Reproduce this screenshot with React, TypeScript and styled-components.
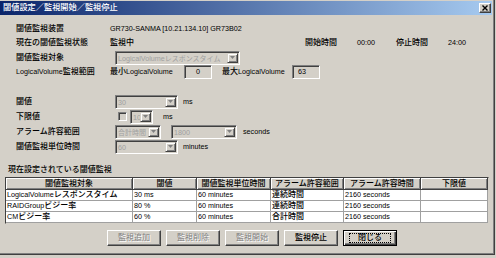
import React from 'react';
import styled, { createGlobalStyle } from 'styled-components';

const Global = createGlobalStyle`
  html, body { margin: 0; padding: 0; background: #d4d0c8; }
  body {
    font-family: "Liberation Sans", "Noto Sans CJK JP", sans-serif;
    font-size: 8px;
    font-weight: 500;
    line-height: 12px;
    color: #000;
  }
  * { box-sizing: border-box; }
`;

const Lat = styled.span`
  font-family: "Liberation Sans", sans-serif;
  font-size: 7.2px;
  font-weight: 400;
`;

function t(s: string) {
  const parts = s.split(/([\x20-\x7E]+)/);
  return parts.map((p, i) =>
    p === '' ? null : /^[\x20-\x7E]+$/.test(p) ? (
      <Lat key={i}>{p}</Lat>
    ) : (
      <React.Fragment key={i}>{p}</React.Fragment>
    )
  );
}

const Window = styled.div`
  width: 495px;
  height: 255px;
  display: flex;
  flex-direction: column;
  background: #d4d0c8;
  padding: 1px 2px 0 0;
  border-right: 1px solid #404040;
  border-bottom: 1px solid #404040;
  box-shadow: inset -1px -1px #808080;
  overflow: hidden;
`;

const TitleBar = styled.div`
  height: 14px;
  display: flex;
  align-items: center;
  justify-content: space-between;
  padding: 0 1px 0 3px;
  background: linear-gradient(to right, #0a246a, #a6caf0);
`;

const TitleText = styled.div`
  color: #fff;
  font-size: 8.2px;
  line-height: 12px;
  white-space: nowrap;
`;

const CloseBtn = styled.div`
  width: 12px;
  height: 10px;
  display: flex;
  align-items: center;
  justify-content: center;
  background: #d4d0c8;
  border: 1px solid;
  border-color: #fff #404040 #404040 #fff;
  box-shadow: inset -1px -1px #808080;
`;

const Section = styled.div<{ $top: number }>`
  margin-top: ${(p) => p.$top}px;
  padding-left: 16px;
  display: flex;
  flex-direction: column;
`;

const Row = styled.div<{ $h: number }>`
  height: ${(p) => p.$h}px;
  display: flex;
  align-items: center;
  white-space: nowrap;
`;

const Cell = styled.div<{ $w?: number; $ml?: number }>`
  ${(p) => (p.$w ? `width: ${p.$w}px; flex: none;` : '')}
  margin-left: ${(p) => p.$ml || 0}px;
  white-space: nowrap;
`;

const SelectBox = styled.div<{ $w: number; $ml?: number }>`
  width: ${(p) => p.$w}px;
  height: 14px;
  margin-left: ${(p) => p.$ml || 0}px;
  flex: none;
  display: flex;
  border: 1px solid;
  border-color: #808080 #fff #fff #808080;
  box-shadow: inset 1px 1px #404040;
  background: #d4d0c8;
  padding: 1px;
`;

const SelectText = styled.div`
  flex: 1;
  min-width: 0;
  overflow: hidden;
  color: #a0a0a0;
  font-size: 7px;
  font-weight: 400;
  padding-left: 1px;
  line-height: 11px;
  white-space: nowrap;
`;

const ArrowBtn = styled.div`
  width: 11px;
  flex: none;
  display: flex;
  align-items: center;
  justify-content: center;
  background: #d4d0c8;
  border: 1px solid;
  border-color: #d4d0c8 #404040 #404040 #d4d0c8;
  box-shadow: inset 1px 1px #fff, inset -1px -1px #808080;
`;

const Field = styled.div<{ $w: number; $center?: boolean }>`
  width: ${(p) => p.$w}px;
  height: 14px;
  flex: none;
  border: 1px solid;
  border-color: #808080 #fff #fff #808080;
  box-shadow: inset 1px 1px #404040;
  background: #d4d0c8;
  text-align: ${(p) => (p.$center ? 'center' : 'left')};
  padding-left: ${(p) => (p.$center ? 0 : 5)}px;
  line-height: 12px;
`;

const Check = styled.div`
  width: 9px;
  height: 9px;
  margin-left: 3px;
  flex: none;
  border: 1px solid;
  border-color: #808080 #fff #fff #808080;
  box-shadow: inset 1px 1px #404040;
  background: #d4d0c8;
`;

const TableLabel = styled.div`
  margin-top: 10px;
  height: 12px;
  padding-left: 8px;
  line-height: 12px;
`;

const Table = styled.div`
  margin: 1px 0 0 5px;
  width: 484px;
  display: grid;
  grid-template-columns: 127px 64px 74px 73px 77px 67px;
  grid-template-rows: 12px 11px 11px 11px;
  border: 1px solid;
  border-color: #404040 #d4d0c8 #d4d0c8 #404040;
  background: #fff;
`;

const Th = styled.div`
  background: #d4d0c8;
  border-right: 1px solid #404040;
  border-bottom: 1px solid #404040;
  box-shadow: inset 1px 1px #fff, inset -1px -1px #808080;
  text-align: center;
  line-height: 11px;
  white-space: nowrap;
  overflow: hidden;
`;

const Td = styled.div`
  background: #fff;
  border-right: 1px solid #a0a0a0;
  border-bottom: 1px solid #a0a0a0;
  padding-left: 1px;
  line-height: 10px;
  white-space: nowrap;
  overflow: hidden;
`;

const ButtonBar = styled.div`
  margin-top: 6px;
  display: flex;
  justify-content: center;
  gap: 5px;
  padding-left: 12px;
`;

const Btn = styled.div<{ $disabled?: boolean; $default?: boolean }>`
  width: 54px;
  height: 16px;
  display: flex;
  align-items: center;
  justify-content: center;
  background: #d4d0c8;
  border: 1px solid;
  border-color: ${(p) => (p.$default ? '#000' : '#fff #404040 #404040 #fff')};
  box-shadow: ${(p) =>
    p.$default
      ? 'inset 1px 1px #fff, inset -1px -1px #404040, inset -2px -2px #808080'
      : 'inset -1px -1px #808080'};
  color: ${(p) => (p.$disabled ? '#808080' : '#000')};
  font-weight: ${(p) => (p.$disabled ? 400 : 500)};
  text-shadow: ${(p) => (p.$disabled ? '1px 1px #fff' : 'none')};
  line-height: 10px;
`;

const Focus = styled.div`
  width: 42px;
  height: 10px;
  border: 1px dotted #000;
  display: flex;
  align-items: center;
  justify-content: center;
`;

const Arrow = () => (
  <svg width="5" height="3" viewBox="0 0 5 3">
    <polygon points="0,0 5,0 2.5,3" fill="#808080" />
  </svg>
);

const Select = ({ w, ml, value }: { w: number; ml?: number; value: string }) => (
  <SelectBox $w={w} $ml={ml}>
    <SelectText>{t(value)}</SelectText>
    <ArrowBtn>
      <Arrow />
    </ArrowBtn>
  </SelectBox>
);

const headers = ['閾値監視対象', '閾値', '閾値監視単位時間', 'アラーム許容範囲', 'アラーム許容時間', '下限値'];
const rows = [
  ['LogicalVolumeレスポンスタイム', '30 ms', '60 minutes', '連続時間', '2160 seconds', ''],
  ['RAIDGroupビジー率', '80 %', '60 minutes', '連続時間', '2160 seconds', ''],
  ['CMビジー率', '60 %', '60 minutes', '合計時間', '2160 seconds', ''],
];

export default function App() {
  return (
    <>
      <Global />
      <Window>
        <TitleBar>
          <TitleText>閾値設定／監視開始／監視停止</TitleText>
          <CloseBtn>
            <svg width="6" height="6" viewBox="0 0 6 6">
              <path d="M0.5 0.5 L5.5 5.5 M5.5 0.5 L0.5 5.5" stroke="#000" strokeWidth="1.4" />
            </svg>
          </CloseBtn>
        </TitleBar>

        <Section $top={7}>
          <Row $h={14}>
            <Cell $w={94}>閾値監視装置</Cell>
            <Cell>{t('GR730-SANMA [10.21.134.10] GR73B02')}</Cell>
          </Row>
          <Row $h={14}>
            <Cell $w={94}>現在の閾値監視状態</Cell>
            <Cell $w={195}>監視中</Cell>
            <Cell $w={52}>開始時間</Cell>
            <Cell $w={39}>{t('00:00')}</Cell>
            <Cell $w={52}>停止時間</Cell>
            <Cell>{t('24:00')}</Cell>
          </Row>
          <Row $h={15}>
            <Cell $w={99}>閾値監視対象</Cell>
            <Select w={125} value="LogicalVolumeレスポンスタイム" />
          </Row>
          <Row $h={14}>
            <Cell $w={94}>{t('LogicalVolume監視範囲')}</Cell>
            <Cell $w={74}>{t('最小LogicalVolume')}</Cell>
            <Field $w={28} $center>
              {t('0')}
            </Field>
            <Cell $w={70} $ml={10}>
              {t('最大LogicalVolume')}
            </Cell>
            <Field $w={28}>{t('63')}</Field>
          </Row>
        </Section>

        <Section $top={15}>
          <Row $h={15}>
            <Cell $w={99}>閾値</Cell>
            <Select w={63} value="30" />
            <Cell $ml={5}>{t('ms')}</Cell>
          </Row>
          <Row $h={15}>
            <Cell $w={99}>下限値</Cell>
            <Check />
            <Select w={23} ml={3} value="10" />
            <Cell $ml={10}>{t('ms')}</Cell>
          </Row>
          <Row $h={15}>
            <Cell $w={99}>アラーム許容範囲</Cell>
            <Select w={46} value="合計時間" />
            <Select w={66} ml={10} value="1800" />
            <Cell $ml={6}>{t('seconds')}</Cell>
          </Row>
          <Row $h={15}>
            <Cell $w={99}>閾値監視単位時間</Cell>
            <Select w={63} value="60" />
            <Cell $ml={5}>{t('minutes')}</Cell>
          </Row>
        </Section>

        <TableLabel>現在設定されている閾値監視</TableLabel>
        <Table>
          {headers.map((h) => (
            <Th key={h}>{t(h)}</Th>
          ))}
          {rows.map((r, i) =>
            r.map((c, j) => <Td key={`${i}-${j}`}>{t(c)}</Td>)
          )}
        </Table>

        <ButtonBar>
          <Btn $disabled>監視追加</Btn>
          <Btn $disabled>監視削除</Btn>
          <Btn $disabled>監視開始</Btn>
          <Btn>監視停止</Btn>
          <Btn $default>
            <Focus>閉じる</Focus>
          </Btn>
        </ButtonBar>
      </Window>
    </>
  );
}
